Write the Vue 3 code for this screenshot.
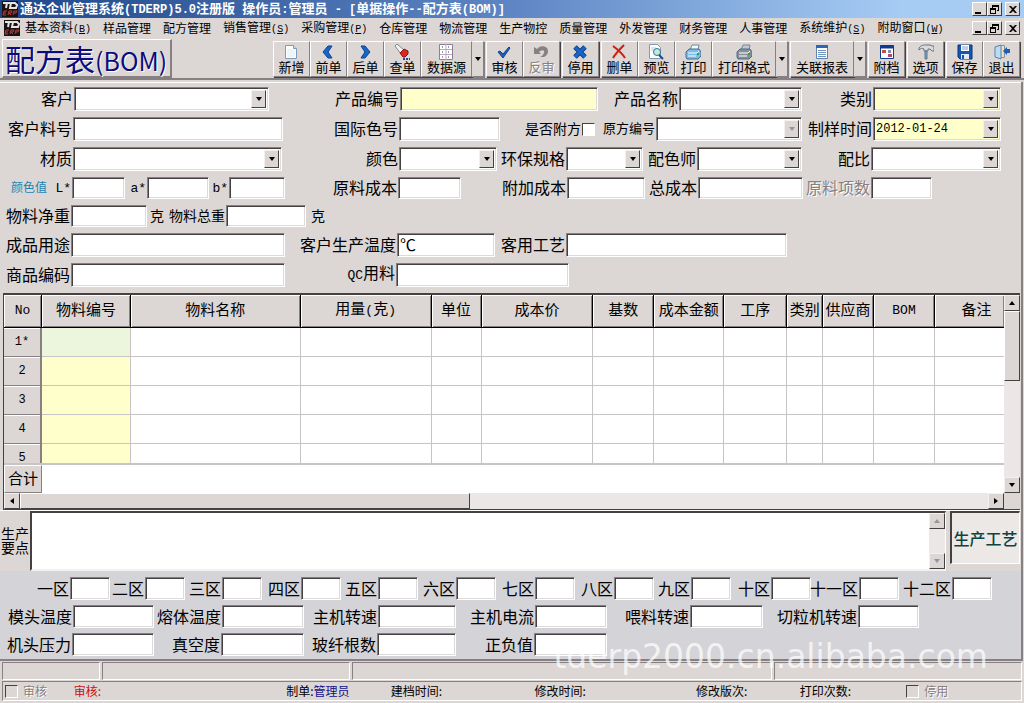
<script setup>
import { h } from 'vue'

// Splits mixed text so Latin runs use the half-width face.
const Txt = (props) =>
  h('span', { class: 'txt' }, props.t.split(/([\x20-\x7e]+)/).filter(Boolean).map((s) =>
    /^[\x20-\x7e]+$/.test(s) ? h('span', { class: 'en' }, s) : s))
Txt.props = ['t']

const menus = [
  ['基本资料', 'B'], ['样品管理'], ['配方管理'], ['销售管理', 'S'], ['采购管理', 'P'], ['仓库管理'], ['物流管理'],
  ['生产物控'], ['质量管理'], ['外发管理'], ['财务管理'], ['人事管理'], ['系统维护', 'S'], ['附助窗口', 'W'],
]

const printer = (body, paper) => `<path d="M5 6L7 1h7l-1 5z" fill="${paper}" stroke="#7288a0"/><path d="M1 8l3-3h10l2 3v4l-3 3H2l-1-2z" fill="${body}" stroke="#4a6a8c"/><path d="M3 9h9l2-2M3 12h8" stroke="#fff" fill="none"/><path d="M12 10h2" stroke="#28a040" stroke-width="2"/>`
const icons = {
  new: '<path d="M2.500 1.500h8l3 3v10h-11z" fill="#fff" stroke="#7d9cb8"/><path d="M10.500 1.500v3h3" fill="#cfe2f2" stroke="#7d9cb8"/><path d="M4 6h7M4 8h8M4 10h8M4 12h8" stroke="#dbe9f5"/>',
  prev: '<path d="M8 2h4L8 8l4 6H8L3 8z" fill="#1668c8" stroke="#0c3f94"/>',
  next: '<path d="M4 2h4l5 6-5 6H4l4-6z" fill="#1668c8" stroke="#0c3f94"/>',
  find: '<path d="M1 2l2-2 7 6-3 4z" fill="#f4f4f4" stroke="#858585"/><path d="M6 9l4-4 4 2v3l-3 3H9z" fill="#d42a20" stroke="#8e1010"/><path d="M9 15h2M12 15h2M15 15h1" stroke="#1a4a9c" stroke-width="2"/>',
  data: '<path d="M1.500.5h13v15h-13z" fill="#fff" stroke="#8b8196"/><path d="M8 0v16M2 5.500h12M2 10.500h12" stroke="#b5aac0"/><path d="M4 3h2M10 3h2M4 8h2M10 8h2M4 13h2M10 13h2" stroke="#4a2a5a" stroke-dasharray="1 1"/>',
  check: '<path d="M2 8l2-1 3 3 6-7 1 1-7 10z" fill="#1b62bd" stroke="#0f418f"/>',
  undo: '<path d="M1 3v7h7L6 8c3-3 6-2 5 1-1 2-2 3-4 4h4c4-2 5-6 3-9-3-3-8-2-10 1z" fill="#868284"/>',
  stop: '<path d="M3 3l10 10M13 3L3 13" stroke="#0f418f" stroke-width="5"/><path d="M3 3l10 10M13 3L3 13" stroke="#1b66c4" stroke-width="3"/>',
  del: '<path d="M2 2c4 3 9 7 12 12M13 1C9 5 5 9 2 14" fill="none" stroke="#cf1f12" stroke-width="2"/>',
  view: '<path d="M1.500.5h8l3 3v11h-11z" fill="#fff" stroke="#7d9cb8"/><path d="M3 4h5M3 6h3" stroke="#b4cfe6"/><circle cx="9" cy="8" r="3.500" fill="#bdeedd" stroke="#3e6e8c"/><path d="M11 11l4 4" stroke="#164a94" stroke-width="2"/>',
  print: printer('#79bde8', '#f3fbff'),
  printf: printer('#8a9098', '#c9c4d8'),
  report: '<path d="M2.500 1.500h11v13h-11z" fill="#fff" stroke="#5a80b4"/><path d="M2 2.500h12" stroke="#2c68b8" stroke-width="3"/><path d="M4 6.500h8M4 8.500h8M4 10.500h8M4 12.500h8" stroke="#6e93bf"/>',
  attach: '<path d="M1.500 1.500h13v13h-13z" fill="#fff" stroke="#123a94"/><path d="M1 3h14" stroke="#123a94" stroke-width="3"/><path d="M3 6h4v3H3z" fill="#c25040"/><path d="M9 6h3v3H9z" fill="#8a8ab0"/><path d="M9 10h4v3H9z" fill="#b04878"/>',
  tool: '<path d="M1 4c2-3 5-3 8-3h3l2 1h2v5h-2l-2-2h-2v2H6V5C4 4 3 4 1 6z" fill="#d8dce0" stroke="#6c7278"/><path d="M7 7h2v8H7z" fill="#7aa2c4" stroke="#5c7890"/>',
  save: '<path d="M1 1h14v14H3l-2-2z" fill="#1258b0" stroke="#0b3274"/><path d="M4 1h8v6H4z" fill="#fff"/><path d="M5 3h6M5 5h6" stroke="#7ea0c4"/><path d="M4 10h8v5H4z" fill="#dfeaf5"/><path d="M5 11h2v4H5z" fill="#1258b0"/>',
  exit: '<path d="M4.500 1.500h6v12h-6z" fill="#f3ddb0" stroke="#8095a8"/><path d="M1 3l6-2v14l-6-2z" fill="#b9dcf4" stroke="#5784ac"/><path d="M16 5h-3V3L9 7l4 4V9h3z" fill="#1a60b8"/>',
}

const groups = [
  [['new', '新增'], ['prev', '前单'], ['next', '后单'], ['find', '查单'], ['data', '数据源', 'dd']],
  [['check', '审核'], ['undo', '反审', 'off']],
  [['stop', '停用']],
  [['del', '删单'], ['view', '预览'], ['print', '打印'], ['printf', '打印格式', 'dd']],
  [['report', '关联报表', 'dd']],
  [['attach', '附档']],
  [['tool', '选项']],
  [['save', '保存'], ['exit', '退出']],
]

// Each field: [label, kind, label class, control class, value]
const rows = [
  ['r1', [['客户', 'select'], ['产品编号', 'text', '', 'req'], ['产品名称', 'select'], ['类别', 'select', '', 'req']]],
  ['r2', [['客户料号', 'text'], ['国际色号', 'text'], ['是否附方', 'check', 'mid'], ['原方编号', 'select', 'small', 'off'], ['制样时间', 'select', '', 'req', '2012-01-24']]],
  ['r3', [['材质', 'select'], ['颜色', 'select'], ['环保规格', 'select'], ['配色师', 'select'], ['配比', 'select']]],
  ['r4', [['颜色值', 'none', 'blue'], ['L*', 'text'], ['a*', 'text'], ['b*', 'text'], ['原料成本', 'text'], ['附加成本', 'text'], ['总成本', 'text'], ['原料项数', 'text', 'dim']]],
  ['r5', [['物料净重', 'text'], ['克', 'none', 'mid'], ['物料总重', 'text', 'mid'], ['克', 'none', 'mid']]],
  ['r6', [['成品用途', 'text'], ['客户生产温度', 'text', '', '', '℃'], ['客用工艺', 'text']]],
  ['r7', [['商品编码', 'text'], ['QC用料', 'text']]],
]
const zones = [
  ['z1', ['一区', '二区', '三区', '四区', '五区', '六区', '七区', '八区', '九区', '十区', '十一区', '十二区']],
  ['z2', ['模头温度', '熔体温度', '主机转速', '主机电流', '喂料转速', '切粒机转速']],
  ['z3', ['机头压力', '真空度', '玻纤根数', '正负值']],
]

const columns = [
  ['No', 38], ['物料编号', 89], ['物料名称', 170], ['用量(克)', 131], ['单位', 50], ['成本价', 112], ['基数', 61],
  ['成本金额', 70], ['工序', 63], ['类别', 36], ['供应商', 51], ['BOM', 61], ['备注', 69],
]
const total = columns.reduce((s, c) => s + c[1], 0)
const lines = ['1*', '2', '3', '4', '5']
const winBtns = ['最小化', '还原', '关闭']
</script>

<template>
  <div class="app">
    <header class="titlebar">
      <svg class="logo" viewBox="0 0 16 16"><rect width="16" height="16" fill="#181414" /><path d="M1 2h7M5 2L4 7M9 2h4l2 2-1 3H8z" stroke="#e8e4e0" stroke-width="2" fill="none" /><path d="M5 10H2l-1 4h3M2 12h2M6 14l1-4h3l-1 2H7l2 2M11 14l1-4h3l-1 2h-2" stroke="#c03838" fill="none" /></svg>
      <h1><Txt t="通达企业管理系统(TDERP)5.0注册版 操作员:管理员 - [单据操作--配方表(BOM)]" /></h1>
      <div class="win">
        <button v-for="(b, i) in winBtns" :key="b" :aria-label="b">
          <svg viewBox="0 0 11 9"><path v-if="i === 0" d="M1 7h6v2H1z" /><path v-else-if="i === 1" d="M3 0h7v6H8V5h1V2H4v1H3zM1 3h6v6H1zM2 5v3h4V5z" fill-rule="evenodd" /><path v-else d="M2 1h2l2 2 2-2h2L7 4.500 10 8H8L6 6 4 8H2l3-3.500z" /></svg>
        </button>
      </div>
    </header>

    <nav class="menubar">
      <svg class="logo" viewBox="0 0 16 16"><rect width="16" height="16" fill="#181414" /><path d="M1 2h7M5 2L4 7M9 2h4l2 2-1 3H8z" stroke="#e8e4e0" stroke-width="2" fill="none" /><path d="M5 10H2l-1 4h3M2 12h2M6 14l1-4h3l-1 2H7l2 2M11 14l1-4h3l-1 2h-2" stroke="#c03838" fill="none" /></svg>
      <button v-for="m in menus" :key="m[0]">{{ m[0] }}<span v-if="m[1]" class="en">(<u>{{ m[1] }}</u>)</span></button>
      <div class="win">
        <button v-for="(b, i) in winBtns" :key="b" :aria-label="b">
          <svg viewBox="0 0 11 9"><path v-if="i === 0" d="M1 7h6v2H1z" /><path v-else-if="i === 1" d="M3 0h7v6H8V5h1V2H4v1H3zM1 3h6v6H1zM2 5v3h4V5z" fill-rule="evenodd" /><path v-else d="M2 1h2l2 2 2-2h2L7 4.500 10 8H8L6 6 4 8H2l3-3.500z" /></svg>
        </button>
      </div>
    </nav>

    <div class="toolbar">
      <h2><Txt t="配方表(BOM)" /></h2>
      <div v-for="(g, gi) in groups" :key="gi" class="group">
        <template v-for="b in g" :key="b[1]">
          <button class="tool" :class="b[2]" :disabled="b[2] === 'off'"><svg viewBox="0 0 16 16" v-html="icons[b[0]]"></svg>{{ b[1] }}</button>
          <button v-if="b[2] === 'dd'" class="drop" :aria-label="b[1] + '选项'"><i class="tri down"></i></button>
        </template>
      </div>
    </div>

    <main>
      <form class="form" @submit.prevent>
        <div v-for="[cls, fields] in rows" :key="cls" class="row" :class="cls">
          <template v-for="(f, i) in fields" :key="i">
            <span v-if="f[1] === 'none'" class="lab" :class="f[2]">{{ f[0] }}</span>
            <label v-else class="lab" :class="f[2]" :for="cls + i"><Txt :t="f[0]" /></label>
            <input v-if="f[1] === 'text'" :id="cls + i" class="box" :class="f[3]" type="text" :value="f[4]">
            <input v-else-if="f[1] === 'check'" :id="cls + i" class="tick" type="checkbox">
            <span v-else-if="f[1] === 'select'" class="box combo" :class="f[3]">
              <select :id="cls + i" :disabled="f[3] === 'off'"><option>{{ f[4] }}</option></select>
              <i class="knob"><i class="tri down"></i></i>
            </span>
          </template>
        </div>
      </form>

      <section class="grid">
        <div class="sheet">
          <div class="view">
            <table>
              <colgroup><col v-for="c in columns" :key="c[0]" :style="{ width: (c[1] / total * 100) + '%' }"></colgroup>
              <thead><tr><th v-for="c in columns" :key="c[0]"><Txt :t="c[0]" /></th></tr></thead>
              <tbody>
                <tr v-for="l in lines" :key="l"><th>{{ l }}</th><td v-for="n in columns.length - 1" :key="n"></td></tr>
              </tbody>
            </table>
          </div>
          <div class="sum"><span :style="{ width: (columns[0][1] / total * 100) + '%' }">合计</span></div>
          <div class="bar horiz"><i class="knob"><i class="tri left"></i></i><i class="thumb"></i><i class="track"></i><i class="knob"><i class="tri right"></i></i></div>
        </div>
        <div class="bar vert"><i class="knob"><i class="tri up"></i></i><i class="thumb"></i><i class="track"></i><i class="knob"><i class="tri down"></i></i><i class="corner"></i></div>
      </section>

      <section class="notes">
        <label for="notes">生产<br>要点</label>
        <div class="memo">
          <textarea id="notes"></textarea>
          <div class="bar vert off"><i class="knob"><i class="tri up"></i></i><i class="track"></i><i class="knob"><i class="tri down"></i></i></div>
        </div>
        <button class="craft">生产工艺</button>
      </section>

      <section class="zones">
        <div v-for="[cls, names] in zones" :key="cls" class="row" :class="cls">
          <template v-for="n in names" :key="n">
            <label class="lab" :for="n">{{ n }}</label><input :id="n" class="box" type="text">
          </template>
        </div>
        <div class="mark">tderp2000.cn.alibaba.com</div>
      </section>
    </main>

    <div class="panels"><i></i><i></i><i></i><i></i></div>
    <footer class="status">
      <label class="dim"><input class="tick" type="checkbox" disabled>审核</label>
      <span class="red">审核:</span>
      <span>制单:<b>管理员</b></span>
      <span>建档时间:</span>
      <span>修改时间:</span>
      <span>修改版次:</span>
      <span>打印次数:</span>
      <label class="dim"><input class="tick" type="checkbox" disabled>停用</label>
    </footer>
  </div>
</template>

<style>
html, body { background: #dcd6d4; }
.en { font-family: "Liberation Mono", monospace; font-size: var(--en); }
</style>

<style scoped>
* { box-sizing: border-box; }
.app {
  --face: #dcd6d4; --lo: #868082; --dark: #454042; --en: 13px;
  --han: "Noto Sans CJK SC", sans-serif;
  font: 16px/20px var(--han); color: #000; background: var(--face); min-height: 100vh; overflow: hidden;
}
button, input, select, textarea { font: inherit; color: inherit; margin: 0; padding: 0; border-radius: 0; appearance: none; outline: none; }
button { background: var(--face); border: 0; white-space: nowrap; }
h1, h2 { margin: 0; white-space: nowrap; }

.titlebar { display: flex; align-items: center; height: 18px; padding: 0 4px 0 2px; background: linear-gradient(90deg, #1e4789 0%, #5f86c4 50%, #a6ccf4 88%); color: #fff; }
.titlebar h1 { --en: 12px; margin-left: 2px; font-size: 13px; line-height: 18px; font-weight: 700; }
.logo { width: 16px; height: 16px; flex: none; }
.win { display: flex; margin-left: auto; }
.win button { width: 15px; height: 14px; display: flex; align-items: center; justify-content: center; border: 1px solid; border-color: #fff var(--dark) var(--dark) #fff; color: #000; }
.win button:last-child { margin-left: 3px; }
.win svg { width: 11px; height: 9px; }
.menubar { --en: 10px; display: flex; align-items: center; height: 20px; padding: 0 4px; gap: 12px; font-size: 12px; line-height: 18px; }
.menubar .logo { margin-right: -7px; }

.toolbar { display: flex; align-items: flex-start; gap: 2px; height: 42px; padding: 3px 4px 0 2px; border-bottom: 2px solid var(--lo); }
.toolbar h2 { height: 39px; margin-top: -2px; margin-right: auto; padding: 0 3px 0 2px; border: solid; border-width: 1px 2px 2px 1px; border-color: #fff var(--lo) var(--lo) #fff; font-size: 30px; line-height: 36px; font-weight: 400; color: #0c0c7c; text-shadow: 1px 1px #fff; }
.toolbar h2 :deep(.en) { font-family: var(--han); font-size: 25px; }
.group { display: flex; }
.tool { display: flex; flex-direction: column; align-items: center; min-width: 37px; height: 36px; padding: 2px 0 0; border: 1px solid; border-color: #fff var(--lo) var(--lo) #fff; box-shadow: 1px 1px var(--dark); font-size: 13px; line-height: 14px; }
.tool.dd { padding: 2px 5px 0; }
.tool svg { width: 16px; height: 16px; flex: none; }
.tool:disabled { color: var(--lo); text-shadow: 1px 1px #fff; }
.drop { width: 12px; height: 36px; display: flex; align-items: center; justify-content: center; border: 1px solid; border-color: #fff var(--lo) var(--lo) var(--face); box-shadow: 1px 1px var(--lo); }

.tri { width: 0; height: 0; border: 3px solid transparent; flex: none; }
.tri.down { border-top-width: 4px; border-top-color: currentColor; border-bottom: 0; }
.tri.up { border-bottom-width: 4px; border-bottom-color: currentColor; border-top: 0; }
.tri.left { border-right-width: 4px; border-right-color: currentColor; border-left: 0; }
.tri.right { border-left-width: 4px; border-left-color: currentColor; border-right: 0; }

main { border-right: 2px solid var(--lo); margin-right: 1px; }
.form { display: flex; flex-direction: column; gap: 6px; padding: 4px 0 6px; margin-top: 2px; border-top: 1px solid #fff; }
.row { display: grid; grid-template-rows: 100%; height: 24px; align-items: stretch; margin-right: -3px; }
.r4, .r5 { height: 22px; }
.row > * { min-width: 0; min-height: 0; }
.r1 { grid-template-columns: 74fr 195fr 131fr 198fr 81fr 123fr 71fr 128fr 23fr; }
.r2 { grid-template-columns: 73fr 210fr 116fr 101fr 82fr 16fr 58fr 146fr 71fr 128fr 23fr; }
.r3 { grid-template-columns: 73fr 209fr 117fr 98fr 69fr 77fr 54fr 105fr 69fr 130fr 23fr; }
.r4 { grid-template-columns: 48fr 24fr 53fr 22fr 62fr 20fr 56fr 113fr 63fr 106fr 78fr 53fr 105fr 68fr 61fr 92fr; }
.r5 { grid-template-columns: 71fr 76fr 18fr 61fr 80fr 20fr 698fr; }
.r6 { grid-template-columns: 71fr 214fr 112fr 98fr 71fr 221fr 237fr; }
.r7 { grid-template-columns: 71fr 214fr 111fr 173fr 455fr; }
.z1 { grid-template-columns: 70fr 40fr 35fr 40fr 37fr 40fr 39fr 40fr 37fr 40fr 38fr 40fr 39fr 40fr 39fr 40fr 37fr 40fr 40fr 40fr 48fr 40fr 53fr 40fr 32fr; }
.z2 { grid-template-columns: 73fr 81fr 68fr 82fr 74fr 78fr 79fr 72fr 83fr 73fr 95fr 61fr 105fr; }
.z3 { grid-template-columns: 72fr 82fr 67fr 83fr 73fr 79fr 78fr 73fr 417fr; }
.lab { display: flex; align-items: center; justify-content: flex-end; padding: 0 1px 2px 0; white-space: nowrap; }
.mid { font-size: 14px; }
.small { font-size: 13px; }
.blue { font-size: 12px; color: #1c84b4; }
.dim { color: var(--lo); text-shadow: 1px 1px #fff; }
.box { width: 100%; height: 100%; background: #fff; border: 1px solid; border-color: var(--lo) #fff #fff var(--lo); box-shadow: inset 1px 1px var(--dark), inset -1px -1px #dedada; padding: 0 2px 2px; }
.req { background: #ffffcc; }
.combo { display: flex; padding: 2px; }
.combo select { flex: 1; min-width: 0; border: 0; background: transparent; font: 12px/18px "Liberation Mono", monospace; }
.knob { display: flex; align-items: center; justify-content: center; flex: none; width: 15px; height: 15px; background: var(--face); border: 1px solid; border-color: #f4f0f0 var(--dark) var(--dark) #f4f0f0; }
.combo .knob { height: auto; pointer-events: none; }
.off { color: #999496; }
.tick { flex: none; align-self: center; width: 13px; height: 13px; background: #fff; border: 1px solid; border-color: var(--dark) #fff #fff var(--dark); }
.tick:disabled { background: var(--face); }

.grid { display: flex; margin: 0 1px 0 3px; border: solid var(--dark); border-width: 2px 0 1px 1px; }
.sheet { flex: 1; min-width: 0; }
.view { height: 169px; overflow: hidden; background: #fff; border-bottom: 1px solid #c6c4c4; }
table { width: 100%; table-layout: fixed; border-collapse: separate; border-spacing: 0; font-size: 15px; }
th { padding: 0; font-weight: 400; background: var(--face); white-space: nowrap; overflow: hidden; }
thead th { height: 33px; padding-bottom: 4px; border-right: 1px solid #000; border-bottom: 1px solid #000; box-shadow: inset 1px 1px #fff, inset -1px -1px var(--lo); }
thead th:last-child { padding-left: 14px; border-right: 0; }
tbody th { height: 29px; border-right: 2px solid var(--lo); border-bottom: 1px solid var(--lo); box-shadow: inset 0 1px #fff; font: 12px/28px "Liberation Mono", monospace; }
td { padding: 0; border-right: 1px solid #c6c4c4; border-bottom: 1px solid #c6c4c4; background: #fff; }
td:last-child { border-right: 0; }
tbody td:nth-child(2) { background: #ffffcc; }
tbody tr:first-child td:nth-child(2) { background: #ecf6dc; }
.sum { height: 29px; background: #fff; border-top: 1px solid #c6c4c4; font-size: 15px; display: flex; }
.sum span { background: var(--face); border: 1px solid; border-color: #fff var(--lo) var(--lo) #fff; text-align: center; line-height: 24px; }
.bar { display: flex; }
.vert { flex-direction: column; width: 16px; }
.bar .knob { width: 16px; height: 16px; }
.track { flex: 1; background: #ebe7e6; }
.thumb { background: var(--face); border: 1px solid; border-color: #fff var(--dark) var(--dark) #fff; }
.horiz .thumb { width: 45%; }
.vert .thumb { height: 70px; }
.corner { height: 16px; }

.notes { display: flex; align-items: stretch; height: 61px; border-top: 1px solid #fff; }
.notes label { width: 30px; padding: 15px 0 0 1px; font-size: 14px; line-height: 14px; white-space: nowrap; }
.memo { flex: 1; min-width: 0; display: flex; background: #fff; border: solid; border-width: 2px 1px 2px 2px; border-color: var(--dark) #fff #f4f0f0 var(--dark); }
.memo textarea { flex: 1; min-width: 0; border: 0; resize: none; background: transparent; }
.craft { width: 70px; height: 53px; margin: 0 1px 0 4px; background: #ebe8e6; border: solid; border-width: 2px 1px 1px 2px; border-color: var(--dark) #fff #fff var(--dark); color: #0c4444; font-weight: 500; }

.zones { position: relative; display: flex; flex-direction: column; gap: 5px; padding: 6px 0 3px; background: #d4d3d7; border-bottom: 2px solid var(--lo); }
.zones .row { height: 23px; }
.mark { position: absolute; right: 33px; bottom: -20px; font: 33px/44px "DejaVu Sans", sans-serif; color: rgba(255, 255, 255, .72); pointer-events: none; }

.panels { display: grid; grid-template-columns: 98fr 248fr 420fr 248fr; gap: 2px; height: 20px; padding: 1px 2px; }
.panels i { border: 1px solid; border-color: var(--lo) #fff #fff var(--lo); }
.status { display: grid; grid-template-columns: 69fr 213fr 105fr 144fr 162fr 104fr 107fr 115fr; height: 20px; margin: 0 2px; padding-left: 2px; border: 1px solid; border-color: var(--lo) #fff #fff var(--lo); font-size: 12px; line-height: 18px; white-space: nowrap; }
.status label { display: flex; gap: 5px; }
.status b { font-weight: 400; color: #10108c; }
.red { color: #cc1010; }
</style>
